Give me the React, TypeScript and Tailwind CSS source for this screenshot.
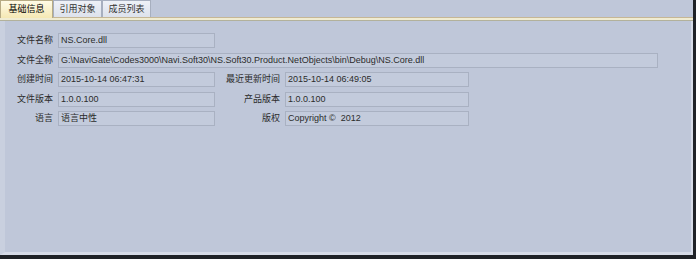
import React from "react";

type Field = {
  label: string;
  value: string;
};

const font = "font-['Liberation_Sans','Noto_Sans_CJK_SC',sans-serif]";

function Label({ text, w }: { text: string; w: string }) {
  return (
    <div className={`${w} shrink-0 text-right pr-[5px] text-[9px] leading-[15px] text-[#2b2b2b]`}>
      {text}
    </div>
  );
}

function Box({ value, w }: { value: string; w: string }) {
  return (
    <div
      className={`${w} h-[15px] shrink-0 border border-[#a9b1c2] bg-[#c3cbdc] pl-[2px] text-[9px] leading-[13px] text-[#2b2b2b] whitespace-pre overflow-hidden`}
    >
      {value}
    </div>
  );
}

function Pair({ left, right }: { left: Field; right?: Field }) {
  return (
    <div className="flex items-center">
      <Label text={left.label} w="w-[53px]" />
      <Box value={left.value} w="w-[157px]" />
      {right && (
        <>
          <Label text={right.label} w="w-[70px]" />
          <Box value={right.value} w="w-[184px]" />
        </>
      )}
    </div>
  );
}

export default function App() {
  const tabs = ["基础信息", "引用对象", "成员列表"];

  return (
    <div className={`w-[696px] h-[259px] bg-[#1f2227] flex flex-col ${font}`}>
      <div className="w-[693px] h-[255px] flex flex-col bg-[#bfc7d9]">
        {/* tab strip */}
        <div className="h-[17px] flex items-end pl-0">
          {tabs.map((t, i) => (
            <div
              key={t}
              className={
                i === 0
                  ? "w-[53px] h-[18px] -mb-px border border-b-0 border-[#b7ab84] bg-gradient-to-b from-[#fffbe6] to-[#f5e8b4] text-center text-[9px] leading-[17px] text-black z-10"
                  : "w-[49px] h-[17px] border border-b-0 border-[#a7afbf] bg-gradient-to-b from-[#eef1f7] to-[#dde2ec] text-center text-[9px] leading-[16px] text-[#333]"
              }
            >
              {t}
            </div>
          ))}
        </div>
        <div className="h-[4px] border-t border-b border-t-[#c6b796] border-b-[#b2b19b] bg-[#f0ecd2]" />

        {/* content */}
        <div className="flex-1 flex border-l-[5px] border-l-[#c9d0df] border-b-[3px] border-b-[#d6dbe7] border-r-[2px] border-r-[#d6dbe7]">
          <div className="flex-1 flex flex-col gap-[4.5px] pt-[12px]">
            <Pair left={{ label: "文件名称", value: "NS.Core.dll" }} />
            <div className="flex items-center">
              <Label text="文件全称" w="w-[53px]" />
              <Box
                value="G:\NaviGate\Codes3000\Navi.Soft30\NS.Soft30.Product.NetObjects\bin\Debug\NS.Core.dll"
                w="w-[600px]"
              />
            </div>
            <Pair
              left={{ label: "创建时间", value: "2015-10-14 06:47:31" }}
              right={{ label: "最近更新时间", value: "2015-10-14 06:49:05" }}
            />
            <Pair
              left={{ label: "文件版本", value: "1.0.0.100" }}
              right={{ label: "产品版本", value: "1.0.0.100" }}
            />
            <Pair
              left={{ label: "语言", value: "语言中性" }}
              right={{ label: "版权", value: "Copyright ©  2012" }}
            />
          </div>
        </div>
      </div>
    </div>
  );
}
